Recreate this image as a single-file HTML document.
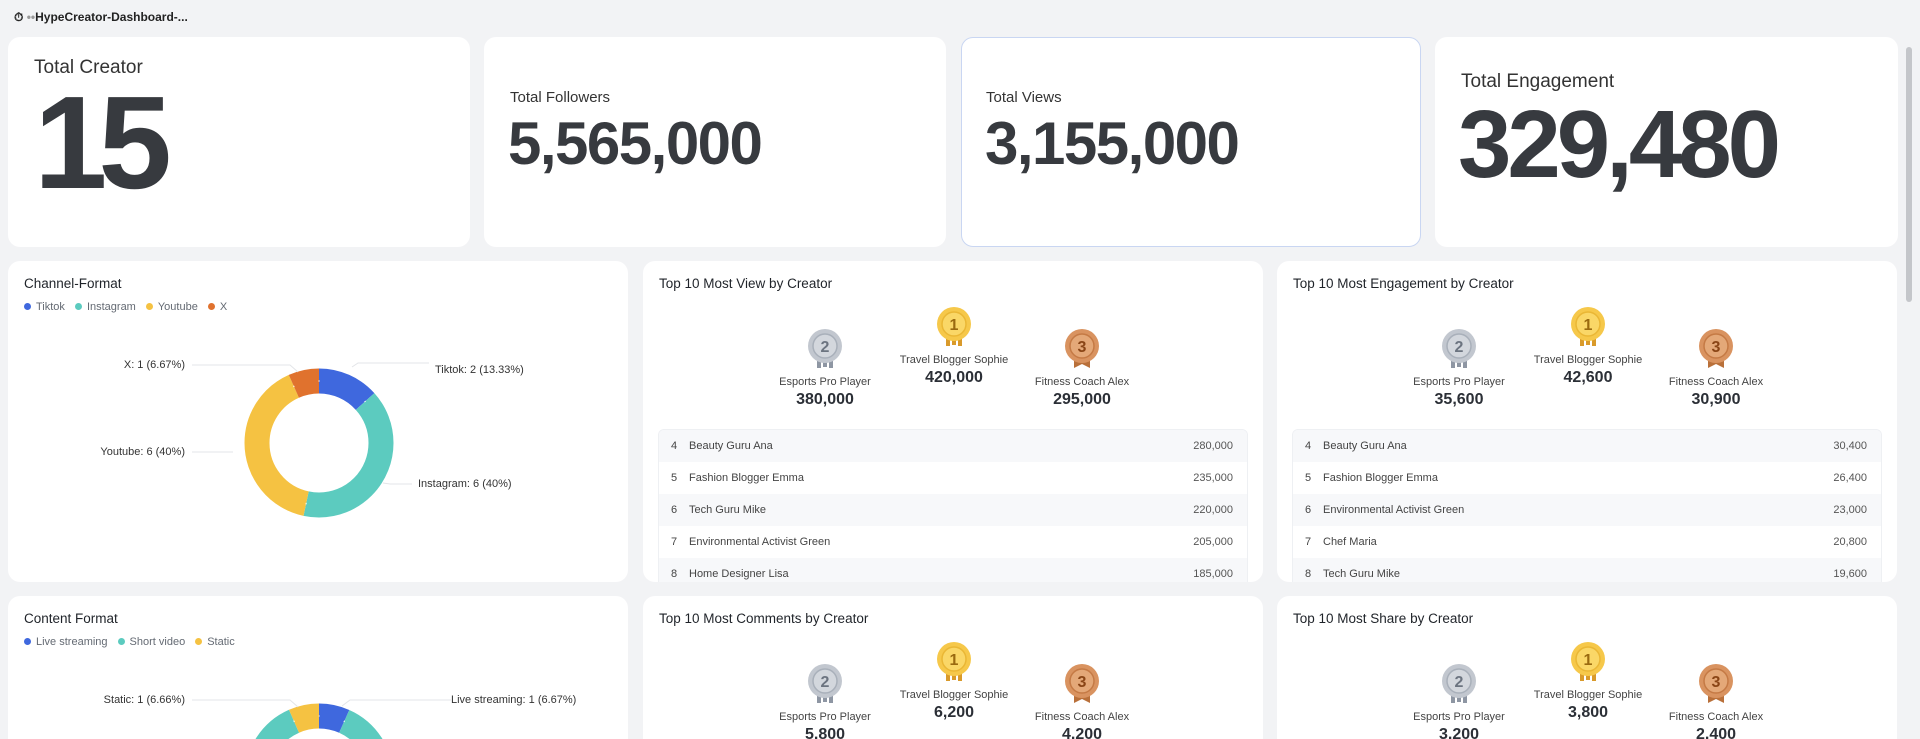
<!DOCTYPE html>
<html><head><meta charset="utf-8"><style>
*{box-sizing:border-box;margin:0;padding:0}
html,body{width:1920px;height:739px;overflow:hidden}
body{background:#f2f3f5;font-family:"Liberation Sans",sans-serif;color:#1f2329;position:relative}
.card{position:absolute;background:#fff;border-radius:12px;overflow:hidden}
.abs{position:absolute;white-space:nowrap}
.big{font-weight:bold;color:#373a3f}
.ttl{position:absolute;left:16px;top:15px;font-size:13.5px;color:#1f2329}
.leg{position:absolute;left:16px;top:40px;font-size:11px;color:#646a73}
.leg i{display:inline-block;width:7px;height:7px;border-radius:50%;margin:0 5px 1px 0;vertical-align:middle}
.leg span{margin-right:10px}
.lbl{font-size:11px;color:#333}
.col{position:absolute;width:180px;text-align:center}
.col .n{font-size:11px;color:#444}
.col .v{font-size:16px;font-weight:bold;color:#2b2f36;margin-top:3px}
.tbl{position:absolute;left:15px;right:15px;top:168px;border:1px solid #eef0f3;border-radius:6px;overflow:hidden}
.tbl div{height:32px;line-height:32px;font-size:11px;color:#444;padding:0 14px 0 12px;display:flex}
.tbl div:nth-child(odd){background:#f7f8fa}
.tbl b{font-weight:normal;width:18px}
.tbl em{font-style:normal;flex:1}
.tbl u{text-decoration:none;color:#555}
.r3{height:143px;border-radius:12px 12px 0 0}
</style></head><body>
<div class="abs" style="left:14px;top:10px;font-size:12px;font-weight:bold;color:#222">&#9201; <span style="color:#999">••</span>HypeCreator-Dashboard-...</div>

<div class="card" style="left:8px;top:37px;width:462px;height:210px">
<div class="abs" style="left:26px;top:20px;font-size:19px;color:#333">Total Creator</div>
<div class="abs big" style="left:26px;top:40px;font-size:132px;letter-spacing:-9px;line-height:132px">15</div>
</div>
<div class="card" style="left:484px;top:37px;width:462px;height:210px">
<div class="abs" style="left:26px;top:52px;font-size:15px;color:#333">Total Followers</div>
<div class="abs big" style="left:24px;top:72px;font-size:60px;letter-spacing:-1.5px;line-height:70px">5,565,000</div>
</div>
<div class="card" style="left:961px;top:37px;width:460px;height:210px;border:1px solid #c9d6f2">
<div class="abs" style="left:24px;top:51px;font-size:15px;color:#333">Total Views</div>
<div class="abs big" style="left:23px;top:71px;font-size:60px;letter-spacing:-1.5px;line-height:70px">3,155,000</div>
</div>
<div class="card" style="left:1435px;top:37px;width:463px;height:210px">
<div class="abs" style="left:26px;top:34px;font-size:19px;color:#333">Total Engagement</div>
<div class="abs big" style="left:23px;top:58px;font-size:96px;letter-spacing:-4px;line-height:100px">329,480</div>
</div>
<div class="abs" style="left:1906px;top:47px;width:6px;height:255px;background:#c4c6ca;border-radius:3px"></div>

<!-- Channel-format -->
<div class="card" style="left:8px;top:261px;width:620px;height:321px">
<div class="ttl">Channel-Format</div>
<div class="leg"><i style="background:#3f68de"></i><span>Tiktok</span><i style="background:#5ccbbf"></i><span>Instagram</span><i style="background:#f5c242"></i><span>Youtube</span><i style="background:#e0722e"></i><span>X</span></div>
<svg class="abs" style="left:0;top:0" width="620" height="321">
<g transform="translate(311,182) rotate(-90)" fill="none" stroke-width="25">
<circle r="62" stroke="#3f68de" stroke-dasharray="51.9 389.6"/>
<circle r="62" stroke="#5ccbbf" stroke-dasharray="155.8 389.6" stroke-dashoffset="-51.9"/>
<circle r="62" stroke="#f5c242" stroke-dasharray="155.8 389.6" stroke-dashoffset="-207.7"/>
<circle r="62" stroke="#e0722e" stroke-dasharray="26 389.6" stroke-dashoffset="-363.5"/>
<circle r="62" stroke="#fff" stroke-width="1.5" stroke-dasharray="1 50.9 1 154.8 1 154.8 1 25" stroke-dashoffset="0.5"/>
</g>
<g stroke="#e3e5e8" fill="none"><path d="M184 104H282l8 7"/><path d="M344 106l6-4H421"/><path d="M184 191H225"/><path d="M375 222l7 1H404"/></g>
</svg>
<div class="abs lbl" style="right:443px;top:98px">X: 1 (6.67%)</div>
<div class="abs lbl" style="left:427px;top:103px">Tiktok: 2 (13.33%)</div>
<div class="abs lbl" style="right:443px;top:185px">Youtube: 6 (40%)</div>
<div class="abs lbl" style="left:410px;top:217px">Instagram: 6 (40%)</div>
</div>

<!-- Content format -->
<div class="card r3" style="left:8px;top:596px;width:620px">
<div class="ttl">Content Format</div>
<div class="leg"><i style="background:#3f68de"></i><span>Live streaming</span><i style="background:#5ccbbf"></i><span>Short video</span><i style="background:#f5c242"></i><span>Static</span></div>
<svg class="abs" style="left:0;top:0" width="620" height="143">
<g transform="translate(311,182) rotate(-90)" fill="none" stroke-width="25">
<circle r="62" stroke="#3f68de" stroke-dasharray="26 389.6"/>
<circle r="62" stroke="#5ccbbf" stroke-dasharray="337.7 389.6" stroke-dashoffset="-26"/>
<circle r="62" stroke="#f5c242" stroke-dasharray="26 389.6" stroke-dashoffset="-363.7"/>
<circle r="62" stroke="#fff" stroke-width="1.5" stroke-dasharray="1 25 1 336.7 1 25" stroke-dashoffset="0.5"/>
</g>
<g stroke="#e3e5e8" fill="none"><path d="M184 104H282l8 7"/><path d="M334 110l8-6H443"/></g>
</svg>
<div class="abs lbl" style="right:443px;top:98px">Static: 1 (6.66%)</div>
<div class="abs lbl" style="left:443px;top:98px">Live streaming: 1 (6.67%)</div>
</div>

<svg width="0" height="0" style="position:absolute"><defs>
<g id="m1"><rect x="12" y="30" width="4" height="10" fill="#d99a2b"/><rect x="18" y="31" width="4" height="8" fill="#d99a2b"/><rect x="24" y="30" width="4" height="10" fill="#d99a2b"/><circle cx="20" cy="18" r="17" fill="#f6c84a"/><circle cx="20" cy="18" r="12" fill="#fad767" stroke="#eab735" stroke-width="1.5"/></g>
<g id="m2"><rect x="12" y="30" width="4" height="10" fill="#8e96a3"/><rect x="18" y="31" width="4" height="8" fill="#8e96a3"/><rect x="24" y="30" width="4" height="10" fill="#8e96a3"/><circle cx="20" cy="18" r="17" fill="#c2c7cf"/><circle cx="20" cy="18" r="12" fill="#d3d7dd" stroke="#a9b0ba" stroke-width="1.5"/></g>
<g id="m3"><path d="M12 30h16v10l-8-4-8 4z" fill="#b9703a"/><circle cx="20" cy="18" r="17" fill="#d99360"/><circle cx="20" cy="18" r="12" fill="#e4a878" stroke="#c57a45" stroke-width="1.5"/></g>
</defs></svg>

<!-- Top 10 cards -->
<div class="card" style="left:643px;top:261px;width:620px;height:321px">
<div class="ttl">Top 10 Most View by Creator</div>
<svg class="abs" style="left:162px;top:67px" width="40" height="44"><use href="#m2"/><text x="20" y="24" text-anchor="middle" font-size="16" font-weight="bold" fill="#6c7480" font-family="Liberation Sans">2</text></svg>
<svg class="abs" style="left:291px;top:45px" width="40" height="44"><use href="#m1"/><text x="20" y="24" text-anchor="middle" font-size="16" font-weight="bold" fill="#9a6a10" font-family="Liberation Sans">1</text></svg>
<svg class="abs" style="left:419px;top:67px" width="40" height="44"><use href="#m3"/><text x="20" y="24" text-anchor="middle" font-size="16" font-weight="bold" fill="#8a4516" font-family="Liberation Sans">3</text></svg>
<div class="col" style="left:92px;top:115px"><div class="n">Esports Pro Player</div><div class="v">380,000</div></div>
<div class="col" style="left:221px;top:93px"><div class="n">Travel Blogger Sophie</div><div class="v">420,000</div></div>
<div class="col" style="left:349px;top:115px"><div class="n">Fitness Coach Alex</div><div class="v">295,000</div></div>
<div class="tbl"><div><b>4</b><em>Beauty Guru Ana</em><u>280,000</u></div><div><b>5</b><em>Fashion Blogger Emma</em><u>235,000</u></div><div><b>6</b><em>Tech Guru Mike</em><u>220,000</u></div><div><b>7</b><em>Environmental Activist Green</em><u>205,000</u></div><div><b>8</b><em>Home Designer Lisa</em><u>185,000</u></div></div>
</div>

<div class="card" style="left:1277px;top:261px;width:620px;height:321px">
<div class="ttl">Top 10 Most Engagement by Creator</div>
<svg class="abs" style="left:162px;top:67px" width="40" height="44"><use href="#m2"/><text x="20" y="24" text-anchor="middle" font-size="16" font-weight="bold" fill="#6c7480" font-family="Liberation Sans">2</text></svg>
<svg class="abs" style="left:291px;top:45px" width="40" height="44"><use href="#m1"/><text x="20" y="24" text-anchor="middle" font-size="16" font-weight="bold" fill="#9a6a10" font-family="Liberation Sans">1</text></svg>
<svg class="abs" style="left:419px;top:67px" width="40" height="44"><use href="#m3"/><text x="20" y="24" text-anchor="middle" font-size="16" font-weight="bold" fill="#8a4516" font-family="Liberation Sans">3</text></svg>
<div class="col" style="left:92px;top:115px"><div class="n">Esports Pro Player</div><div class="v">35,600</div></div>
<div class="col" style="left:221px;top:93px"><div class="n">Travel Blogger Sophie</div><div class="v">42,600</div></div>
<div class="col" style="left:349px;top:115px"><div class="n">Fitness Coach Alex</div><div class="v">30,900</div></div>
<div class="tbl"><div><b>4</b><em>Beauty Guru Ana</em><u>30,400</u></div><div><b>5</b><em>Fashion Blogger Emma</em><u>26,400</u></div><div><b>6</b><em>Environmental Activist Green</em><u>23,000</u></div><div><b>7</b><em>Chef Maria</em><u>20,800</u></div><div><b>8</b><em>Tech Guru Mike</em><u>19,600</u></div></div>
</div>

<div class="card r3" style="left:643px;top:596px;width:620px">
<div class="ttl">Top 10 Most Comments by Creator</div>
<svg class="abs" style="left:162px;top:67px" width="40" height="44"><use href="#m2"/><text x="20" y="24" text-anchor="middle" font-size="16" font-weight="bold" fill="#6c7480" font-family="Liberation Sans">2</text></svg>
<svg class="abs" style="left:291px;top:45px" width="40" height="44"><use href="#m1"/><text x="20" y="24" text-anchor="middle" font-size="16" font-weight="bold" fill="#9a6a10" font-family="Liberation Sans">1</text></svg>
<svg class="abs" style="left:419px;top:67px" width="40" height="44"><use href="#m3"/><text x="20" y="24" text-anchor="middle" font-size="16" font-weight="bold" fill="#8a4516" font-family="Liberation Sans">3</text></svg>
<div class="col" style="left:92px;top:115px"><div class="n">Esports Pro Player</div><div class="v">5,800</div></div>
<div class="col" style="left:221px;top:93px"><div class="n">Travel Blogger Sophie</div><div class="v">6,200</div></div>
<div class="col" style="left:349px;top:115px"><div class="n">Fitness Coach Alex</div><div class="v">4,200</div></div>
</div>

<div class="card r3" style="left:1277px;top:596px;width:620px">
<div class="ttl">Top 10 Most Share by Creator</div>
<svg class="abs" style="left:162px;top:67px" width="40" height="44"><use href="#m2"/><text x="20" y="24" text-anchor="middle" font-size="16" font-weight="bold" fill="#6c7480" font-family="Liberation Sans">2</text></svg>
<svg class="abs" style="left:291px;top:45px" width="40" height="44"><use href="#m1"/><text x="20" y="24" text-anchor="middle" font-size="16" font-weight="bold" fill="#9a6a10" font-family="Liberation Sans">1</text></svg>
<svg class="abs" style="left:419px;top:67px" width="40" height="44"><use href="#m3"/><text x="20" y="24" text-anchor="middle" font-size="16" font-weight="bold" fill="#8a4516" font-family="Liberation Sans">3</text></svg>
<div class="col" style="left:92px;top:115px"><div class="n">Esports Pro Player</div><div class="v">3,200</div></div>
<div class="col" style="left:221px;top:93px"><div class="n">Travel Blogger Sophie</div><div class="v">3,800</div></div>
<div class="col" style="left:349px;top:115px"><div class="n">Fitness Coach Alex</div><div class="v">2,400</div></div>
</div>
</body></html>
